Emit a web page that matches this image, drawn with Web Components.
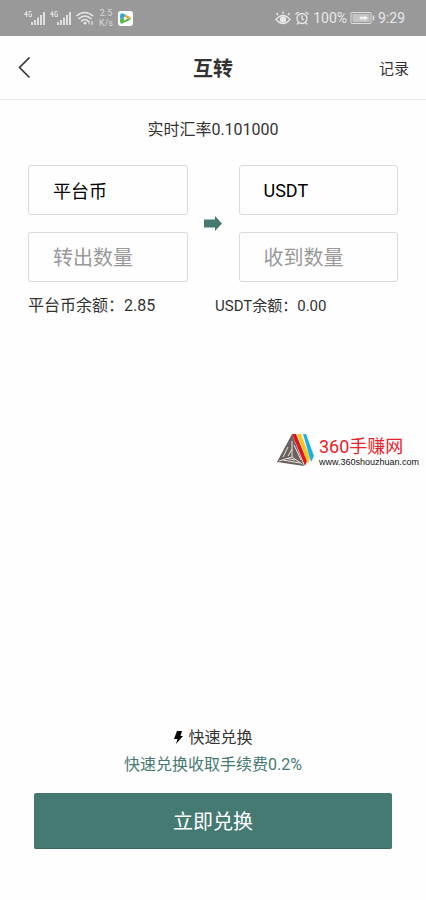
<!DOCTYPE html>
<html lang="zh-CN">
<head>
<meta charset="utf-8">
<meta name="viewport" content="width=device-width, initial-scale=1">
<title>互转</title>
<style>
body{margin:0;background:#fefefe;color:#333;font-family:Roboto,"Noto Sans CJK SC",sans-serif;font-size:16px}
</style>
</head>
<body>
<transfer-page></transfer-page>
<script>
const define = (name, html) => customElements.define(name, class extends HTMLElement {
  constructor() {
    super();
    const t = document.createElement('template');
    t.innerHTML = html;
    this.attachShadow({mode: 'open'}).append(t.content.cloneNode(true));
  }
});

define('signal-icon', `
<style>:host{display:block;width:22px;height:16px}svg{display:block}</style>
<svg width="22" height="16" viewBox="0 0 22 16" fill="#e0e0e0" aria-hidden="true">
<path d="M2.500 1v6M2.500 1.500L.5 4.500H4M7.500 1.500H5v5h2.500V4H6.500" fill="none" stroke="#e0e0e0" stroke-width="1"/>
<path d="M7 12h2v3H7zM10 10h2v5h-2zM13 7.500h2V15h-2zM16 5h2v10h-2zM19 2h2v13h-2z"/></svg>`);

define('status-bar', `
<style>
:host{display:flex;align-items:center;height:36px;padding:0 21px 0 24px;background:#999;color:#e8e8e8;font-size:14px;line-height:16px}
.left,.right{display:flex;align-items:center}
.left{gap:4px;flex:1}
.right{gap:3px}
.speed{font-size:9px;line-height:10px;text-align:center;width:16px;color:#d8d8d8}
svg{display:block;flex:none}
</style>
<div class="left">
<signal-icon></signal-icon><signal-icon></signal-icon>
<svg width="18" height="16" viewBox="0 0 18 16" fill="none" stroke="#e6e6e6" stroke-width="1.500" aria-hidden="true"><path d="M.5 6Q8.500-1 17 6M2.500 9q6.500-6 13 0M5 11.500q4-4 7.500 0"/><path d="M9 11.500l2 1.500-2 2-2-2z" fill="#e6e6e6" stroke="none"/><path d="M13 14.500V11m-1 1 1-1 1 1M16 11v3.500m-1-1 1 1 1-1" stroke-width="1"/></svg>
<span class="speed">2.5<br>K/s</span>
<svg width="15" height="15" viewBox="0 0 15 15" aria-hidden="true"><rect width="15" height="15" rx="3" fill="#fff"/><path d="M3 2.500Q2 3 2 7.500l4 0L8 4Q4 1.500 3 2.500z" fill="#2aa5e0"/><path d="M7 3.500q6 2.500 6 4H6z" fill="#f5a52a"/><path d="M2 7.500Q2 13 3.500 12.800 13 9 13 7.500z" fill="#54b948"/><path d="M6 5.500v4.200L9.500 7.500z" fill="#fff"/></svg>
</div>
<div class="right">
<svg width="16" height="14" viewBox="0 0 16 14" fill="none" stroke="#e8e8e8" stroke-width="1.300" aria-hidden="true"><path d="M1 8.500q7-8 14 0-7 8-14 0zM3 4 1.500 2M8 3V.5M13 4l1.500-2"/><circle cx="8" cy="8.500" r="2.500" fill="#e8e8e8"/></svg>
<svg width="16" height="14" viewBox="0 0 16 14" fill="none" stroke="#e8e8e8" stroke-width="1.300" aria-hidden="true"><circle cx="8" cy="7.500" r="5"/><path d="M8 4.500v3.300l2 1.200M1.500 3.500l3-2.500M14.500 3.500l-3-2.500M4.500 11.500 3 13.500M11.500 11.500l1.500 2"/></svg>
<span>100%</span>
<svg width="25" height="12" viewBox="0 0 25 12" aria-hidden="true"><rect x="1" y=".5" width="20" height="11" rx="1" fill="none" stroke="#e0e0e0"/><path d="M2.500 2h17v8h-17z" fill="#c4c4c4"/><path d="M5 6h4l3-2v1.500l3-1.500 3 2-3 2-2-1.500-1 1.500-3-2z" fill="#f5f5f5"/><path d="M23.500 3.500v5" stroke="#e0e0e0" stroke-width="1.500"/></svg>
<time>9:29</time>
</div>`);

define('nav-header', `
<style>
:host{display:grid;grid-template-columns:1fr auto 1fr;align-items:center;height:63px;padding:0 17px;border-bottom:1px solid #e8e8e8}
h1{margin:0;padding-top:2px;font-size:20px;line-height:28px;font-weight:700}
button{justify-self:start;display:flex;border:0;padding:0;background:none;color:#333}
a{justify-self:end;padding-top:2px;font-size:15px;line-height:24px;color:inherit;text-decoration:none}
</style>
<button type="button" aria-label="返回"><svg width="15" height="22" viewBox="0 0 15 22" fill="none" stroke="currentColor" stroke-width="1.600"><path d="M12.500.5 2.500 10.500l10 10"/></svg></button>
<h1><slot></slot></h1>
<a href="#records"><slot name="action"></slot></a>`);

customElements.define('form-field', class extends HTMLElement {
  constructor() {
    super();
    this.attachShadow({mode: 'open'}).innerHTML = `
<style>
:host{display:block;min-width:0}
input{box-sizing:border-box;display:block;width:100%;height:50px;padding:0 24px;border:1px solid #d9d9d9;border-radius:3px;background:#fefefe;color:#000;font-family:inherit;font-size:18px;outline:0}
input:placeholder-shown{padding-top:2px;font-size:20px}
input::placeholder{color:#999;opacity:1}
</style><input>`;
  }
  connectedCallback() {
    const input = this.shadowRoot.querySelector('input');
    input.setAttribute('aria-label', this.getAttribute('label'));
    if (this.hasAttribute('value')) {
      input.setAttribute('value', this.getAttribute('value'));
      input.readOnly = true;
    } else {
      input.placeholder = this.getAttribute('label');
      input.inputMode = 'decimal';
    }
  }
});

define('exchange-form', `
<style>
:host{display:block;padding:0 28px}
.fields{display:grid;grid-template-columns:1fr 19px 1fr;column-gap:16px;align-items:center}
.side{display:grid;gap:17px}
svg{display:block}
.balances{display:grid;grid-template-columns:1fr 1fr;column-gap:4px;align-items:center;margin-top:12px;line-height:24px}
.small{font-size:15px}
</style>
<div class="fields">
<div class="side"><form-field label="转出币种" value="平台币"></form-field><form-field label="转出数量"></form-field></div>
<svg width="19" height="16" viewBox="0 0 19 16" fill="#457a73" aria-hidden="true"><path d="M0 3.500h11V0l7 7.500-7 7.500v-3.500H0z"/></svg>
<div class="side"><form-field label="收到币种" value="USDT"></form-field><form-field label="收到数量"></form-field></div>
</div>
<div class="balances"><span>平台币余额：2.85</span><span class="small">USDT余额：0.00</span></div>`);

define('site-logo', `
<style>
:host{display:flex;align-items:flex-start;gap:5px}
svg{display:block}
.name{font-size:18px;line-height:20px;color:#e6222a}
.url{font-family:"Liberation Sans",sans-serif;font-size:9px;line-height:10px;color:#111}
.text{display:grid;padding-top:3px}
</style>
<svg width="37" height="32" viewBox="0 0 37 32" aria-hidden="true">
<path d="M15 0 0 28l27 4z" fill="#6b625e"/>
<path d="M15 7v16L2 27M15 23l10 7M11 13 6 23M15 15l-4 7M6 26l17 3M10 24.500l8 1.500M17 11l7 15" stroke="#e9e6e5" fill="none"/>
<path d="M15 0h4l11 27-2 5z" fill="#e0141f"/><path d="M20 0h4l9 24-2 6z" fill="#f9c51b"/><path d="M26 0h3l8 22-3 6z" fill="#1bb0e4"/>
</svg>
<div class="text"><span class="name">360手赚网</span><span class="url">www.360shouzhuan.com</span></div>`);

define('exchange-footer', `
<style>
:host{display:block;padding:0 34px 51px;text-align:center}
p{margin:0;line-height:27px}
.title{display:flex;align-items:center;justify-content:center;gap:5px}
.fee{color:#457a73}
button{display:block;width:100%;height:56px;margin-top:15px;border:0;border-bottom:1px solid #3b6861;border-radius:2px;background:#457a73;color:#fff;font-family:inherit;font-size:20px}
</style>
<p class="title"><svg width="10" height="14" viewBox="0 0 10 14" fill="#000" aria-hidden="true"><path d="M4 0h5L7.500 5H10L3 13l1.500-5H1z"/></svg><span>快速兑换</span></p>
<p class="fee">快速兑换收取手续费0.2%</p>
<button type="button">立即兑换</button>`);

define('transfer-page', `
<style>
:host{display:flex;flex-direction:column;min-height:100vh}
.rate{margin:18px 0 23px;text-align:center;line-height:24px}
site-logo{align-self:flex-end;margin:116px 7px 40px 0}
exchange-footer{margin-top:auto}
</style>
<status-bar></status-bar>
<nav-header>互转<span slot="action">记录</span></nav-header>
<p class="rate">实时汇率0.101000</p>
<exchange-form></exchange-form>
<site-logo></site-logo>
<exchange-footer></exchange-footer>`);
</script>
</body>
</html>
